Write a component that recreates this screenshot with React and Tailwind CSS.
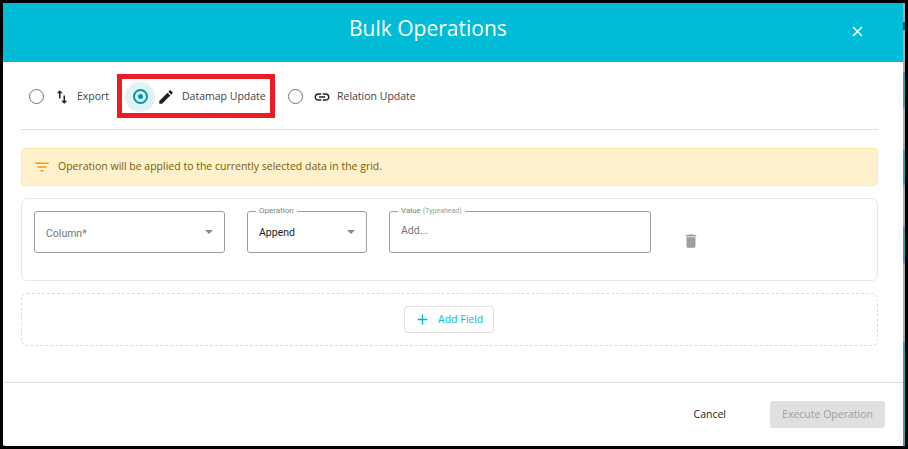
const open = { fontFamily: '"Open Sans", sans-serif' };
const roboto = { fontFamily: 'Roboto, sans-serif' };

function Icon({ d, className }) {
  return (
    <svg viewBox="0 0 24 24" className={className} fill="currentColor">
      <path d={d} />
    </svg>
  );
}

const P = {
  swap: "M16 17.01V10h-2v7.01h-3L15 21l4-3.99h-3zM9 3L5 6.99h3V14h2V6.99h3L9 3z",
  edit: "M3 17.25V21h3.75L17.81 9.94l-3.75-3.75L3 17.25zM20.71 7.04c.39-.39.39-1.02 0-1.41l-2.34-2.34a.9959.9959 0 0 0-1.41 0l-1.83 1.83 3.75 3.75 1.83-1.83z",
  link: "M3.9 12c0-1.71 1.39-3.1 3.1-3.1h4V7H7c-2.76 0-5 2.24-5 5s2.24 5 5 5h4v-1.9H7c-1.71 0-3.1-1.39-3.1-3.1zM8 13h8v-2H8v2zm9-6h-4v1.9h4c1.71 0 3.1 1.39 3.1 3.1s-1.39 3.1-3.1 3.1h-4V17h4c2.76 0 5-2.24 5-5s-2.24-5-5-5z",
  del: "M6 19c0 1.1.9 2 2 2h8c1.1 0 2-.9 2-2V7H6v12zM19 4h-3.5l-1-1h-5l-1 1H5v2h14V4z",
  filter: "M10 18h4v-2h-4v2zM3 6v2h18V6H3zm3 7h12v-2H6v2z",
  add: "M19 13h-6v6h-2v-6H5v-2h6V5h2v6h6v2z",
  close: "M19 6.41L17.59 5 12 10.59 6.41 5 5 6.41 10.59 12 5 17.59 6.41 19 12 13.41 17.59 19 19 17.59 13.41 12z",
};

function Caret() {
  return <div className="-mt-[1px] w-0 h-0 border-x-[4px] border-x-transparent border-t-[4px] border-t-[#8a8a8a]" />;
}

function Radio() {
  return <div className="w-[15px] h-[15px] rounded-full border border-[#757575] shrink-0" />;
}

function Legend({ children }) {
  return (
    <div className="absolute -top-[6px] left-[8px] bg-white px-[3px] text-[8px] leading-[10px] text-[#808080]" style={roboto}>
      {children}
    </div>
  );
}

export default function App() {
  return (
    <div className="w-[908px] h-[449px] bg-black pt-[3px] pl-[3px] overflow-hidden flex items-start">
      <div className="relative w-[900px] h-[443px] bg-white flex flex-col shrink-0">
        <header className="h-[59px] shrink-0 bg-[#00bcd6] flex items-center pl-[346px] pr-[37px] justify-between text-white">
          <h1 className="text-[21px] leading-[52px] -mt-[9px]" style={open}>Bulk Operations</h1>
          <Icon d={P.close} className="w-[17px] h-[17px] -mt-[3px]" />
        </header>

        <div className="flex-1 pl-[18px] pr-[25px] flex flex-col">
          <div className="h-[68px] shrink-0 border-b border-[#e0e0e0] flex items-center text-[10.5px] text-[#424242] pl-[8px] pt-[2px]" style={open}>
            <Radio />
            <Icon d={P.swap} className="w-[18px] h-[18px] ml-[9px] text-[#212121]" />
            <span className="ml-[6px] w-[33px]">Export</span>
            <div className="ml-[15px] w-[30px] h-[30px] rounded-full bg-[#e0f2f4] flex items-center justify-center shrink-0">
              <div className="w-[15px] h-[15px] rounded-full border-2 border-[#0097a7] flex items-center justify-center">
                <div className="w-[5px] h-[5px] rounded-full bg-[#0097a7]" />
              </div>
            </div>
            <Icon d={P.edit} className="w-[18px] h-[18px] ml-[2px] text-[#212121]" />
            <span className="ml-[7px] w-[84px]">Datamap Update</span>
            <div className="ml-[22px]"><Radio /></div>
            <Icon d={P.link} className="w-[18px] h-[18px] ml-[10px] text-[#212121]" />
            <span className="ml-[6px]">Relation Update</span>
          </div>

          <div className="mt-[18px] h-[38px] shrink-0 rounded-[4px] border border-[#fce8a8] bg-[#fef1cc] flex items-center pl-[11px] text-[10.5px] text-[#7a5c00]" style={open}>
            <Icon d={P.filter} className="w-[18px] h-[18px] -mt-[1px] text-[#ff9800]" />
            <span className="ml-[7px] -mt-[1px]">Operation will be applied to the currently selected data in the grid.</span>
          </div>

          <div className="mt-[12px] h-[83px] shrink-0 rounded-[6px] border border-[#e8e8e8] pt-[12px] pl-[12px] flex items-start">
            <div className="w-[191px] h-[42px] rounded-[3px] border border-[#9e9e9e] flex items-center justify-between px-[11px] text-[10.5px] text-[#757575]" style={roboto}>
              <span className="mt-[4px]">Column*</span>
              <Caret />
            </div>
            <div className="relative ml-[22px] w-[120px] h-[42px] rounded-[3px] border border-[#9e9e9e] flex items-center justify-between px-[11px] text-[10.5px] text-[#212121]" style={roboto}>
              <Legend>Operation</Legend>
              <span className="mt-[2px]">Append</span>
              <Caret />
            </div>
            <div className="relative ml-[22px] w-[262px] h-[42px] rounded-[3px] border border-[#9e9e9e] flex items-center pl-[11px] text-[10.5px] text-[#757575]" style={roboto}>
              <Legend>Value <span className="text-[7px] text-[#9e9e9e]">(Typeahead)</span></Legend>
              <span className="-mt-[3px]">Add...</span>
            </div>
            <Icon d={P.del} className="w-[18px] h-[18px] ml-[31px] mt-[21px] text-[#9e9e9e]" />
          </div>

          <div className="mt-[12px] h-[53px] shrink-0 rounded-[6px] border border-dashed border-[#dcdcdc] flex items-center justify-center">
            <div className="-ml-[1px] w-[90px] h-[27px] rounded-[3px] border border-[#e0e0e0] flex items-center pl-[9px] text-[10.5px] text-[#00bcd6]" style={open}>
              <Icon d={P.add} className="w-[17px] h-[17px]" />
              <span className="ml-[7px]">Add Field</span>
            </div>
          </div>
        </div>

        <footer className="h-[64px] shrink-0 border-t border-[#e0e0e0] flex items-center justify-end pr-[18px] text-[10.5px]" style={open}>
          <span className="text-[#212121] mr-[44px]">Cancel</span>
          <div className="w-[115px] h-[27px] rounded-[3px] bg-[#e0e0e0] text-[#9e9e9e] flex items-center justify-center">Execute Operation</div>
        </footer>

        <div className="absolute left-[114px] top-[71px] w-[158px] h-[44px] border-[5px] border-[#ed1c24] pointer-events-none" />
        <div className="absolute left-0 bottom-0 w-[2px] h-[1px] bg-[#5aa5b0]" />
      </div>

      <div className="w-[2px] h-[443px] shrink-0 flex flex-col">
        <div className="h-[19px] bg-[#a8a8a8]" />
        <div className="h-[8px] bg-[#00707a]" />
        <div className="h-[42px] bg-[#a8a8a8]" />
        <div className="h-[36px] bg-[#3f9fae]" />
        <div className="h-[42px] bg-[#a8a8a8]" />
        <div className="h-[35px] bg-[#3f9fae]" />
        <div className="h-[42px] bg-[#a8a8a8]" />
        <div className="h-[36px] bg-[#3f9fae]" />
        <div className="h-[79px] bg-[#a8a8a8]" />
        <div className="h-[104px] bg-[#3f9fae]" />
      </div>
    </div>
  );
}
